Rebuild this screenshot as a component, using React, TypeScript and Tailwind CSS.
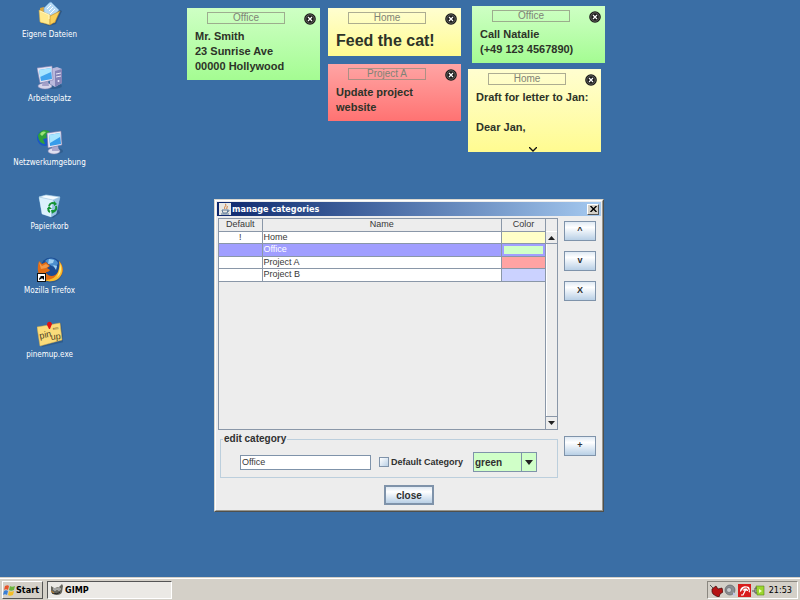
import { useState, type ReactNode } from "react";

const tahoma = "font-['DejaVu_Sans_Condensed','DejaVu_Sans',sans-serif]";

function FolderIcon() {
  return (
    <svg viewBox="0 0 26 26" className="size-[26px]" aria-hidden="true">
      <path d="M4 22l8 3 7-2 6-13-2-1z" fill="#1d3c62" opacity=".45" />
      <path d="M3 7l4-1 2 2 9-1 3 3-3 12H4z" fill="#dda63b" />
      <path d="M7 7l5-5 2-1 8 8-7 9-8-3z" fill="#b6daf5" stroke="#6da5d4" strokeWidth=".7" />
      <path d="M10 8l4-4M12 10l4-4M13 13l5-5" stroke="#fff" strokeWidth="1" />
      <path d="M2 9l11 5v10L3 21z" fill="#ffe98d" stroke="#d7ab3f" strokeWidth=".5" />
      <path d="M13 15l10-5-5 11-5 3z" fill="#f9cf58" stroke="#b98527" strokeWidth=".6" />
      <path d="M3 10l9 4v4" stroke="#fff6c4" strokeWidth="1" fill="none" />
    </svg>
  );
}

function ComputerIcon() {
  return (
    <svg viewBox="0 0 26 26" className="size-[26px]" aria-hidden="true">
      <ellipse cx="16" cy="21" rx="9" ry="3" fill="#23456f" opacity=".4" />
      <path d="M13 4l7-2 5 2v14l-7 4-5-3z" fill="#bab9dc" />
      <path d="M18 6l7-2v14l-7 4z" fill="#8483b6" />
      <path d="M19 9l5-1M19 12l5-1" stroke="#e8e7f8" />
      <circle cx="21.500" cy="16" r="1" fill="#ecebff" />
      <ellipse cx="8" cy="21" rx="7" ry="3" fill="#d7d5ea" stroke="#8c8ab5" strokeWidth=".5" />
      <path d="M6 16h5l1 5H5z" fill="#a3a0c8" />
      <path d="M0 3l15-2 1 14-13 3z" fill="#e4e3f3" stroke="#807eae" strokeWidth=".6" />
      <path d="M2 5l12-2 1 11-11 2z" fill="#42a4ee" />
      <path d="M2 5l12-2v4L3 12z" fill="#a8e5ff" />
    </svg>
  );
}

function NetworkIcon() {
  return (
    <svg viewBox="0 0 26 26" className="size-[26px]" aria-hidden="true">
      <ellipse cx="19" cy="22" rx="7" ry="3" fill="#23456f" opacity=".4" />
      <circle cx="8" cy="9" r="8" fill="#1b58c4" />
      <path d="M1 6c3-6 9-6 12-3L9 6l1 3-4 1 2 5c-4 0-7-4-7-9z" fill="#2fa13a" />
      <path d="M3 5c2-3 4-3 6-2L5 7z" fill="#9be477" />
      <ellipse cx="17" cy="22" rx="6" ry="3" fill="#dfdeef" stroke="#8784ae" strokeWidth=".5" />
      <path d="M15 17h6l1 5h-7z" fill="#aaa8ce" />
      <path d="M10 4l14-2 1 14-14 3z" fill="#e9e8f5" stroke="#706e9d" strokeWidth=".6" />
      <path d="M12 6l11-2 1 11-11 2z" fill="#379ceb" />
      <path d="M12 6l11-2v4l-10 6z" fill="#a7e5ff" />
    </svg>
  );
}

function RecycleBinIcon() {
  return (
    <svg viewBox="0 0 26 26" className="size-[26px]" aria-hidden="true">
      <path d="M5 21l11 4 7-5-1-3z" fill="#23456f" opacity=".45" />
      <path d="M2 4l7-2 14 2-4 17-5 3-9-3z" fill="#b7ddf4" stroke="#76a8cf" strokeWidth=".6" />
      <path d="M2 4l14 3-2 17-9-3z" fill="#dcf1fd" />
      <path d="M16 7l7-3-4 17-5 3z" fill="#98c3e3" />
      <path d="M2 4l7-2 14 2-7 3z" fill="#f3fbff" stroke="#94bcd8" strokeWidth=".5" />
      <g fill="none" stroke="#159335" strokeWidth="2">
        <path d="M12 13c1-3 4-4 6-2M19 13c1 3-1 5-3 6M13 19c-2-1-2-3-1-4" />
      </g>
      <path d="M17 8l3 3-3 2zM18 17l-3 4-1-4zM10 16l2-3 3 3z" fill="#159335" />
    </svg>
  );
}

function FirefoxIcon() {
  return (
    <svg viewBox="0 0 26 26" className="size-[26px]" aria-hidden="true">
      <circle cx="14" cy="14" r="11.500" fill="#1d3c62" opacity=".4" />
      <circle cx="14" cy="11" r="10.500" fill="#1c4c92" />
      <path d="M8 4c4-4 11-3 13 2l-2 5-6-3z" fill="#4c8fce" />
      <path d="M12 2l5 1-1 3-5 1zM16 8l4 1-1 4z" fill="#9fcff0" />
      <path d="M22 4c5 5 5 12 1 16s-12 6-17 2C0 18 0 10 2 4l3 3 4-2 4 4-3 2 3 2c-2 3-4 1-4 3 3 4 9 4 12-1 2-4 3-7 1-11z" fill="#e06c14" />
      <path d="M22 4c5 6 4 13 0 17-4 4-10 4-14 2 7 0 11-3 13-8 1-3 2-7 1-11z" fill="#f7bd2f" />
      <path d="M23 7c2 5 1 10-3 13 2-4 3-8 3-13z" fill="#ffec8a" />
      <path d="M2 5l3 4 4-2 3 2-3 2-5 1z" fill="#f29a4a" />
      <rect x=".5" y="16.500" width="8" height="8" fill="#fff" stroke="#111" />
      <path d="M2 23c0-2 1-3 2-3l-1-1h4v4l-1-1c-1-1-2 0-4 1z" fill="#000" />
    </svg>
  );
}

function PinIcon() {
  return (
    <svg viewBox="0 0 26 26" className="size-[26px]" aria-hidden="true">
      <path d="M2 6l22-4 3 19-22 5z" fill="#1d3c62" opacity=".35" />
      <path d="M0 6l23-4 2 17-22 6z" fill="#fbdc7a" stroke="#d7ae4b" strokeWidth=".5" />
      <g fill="#4a3c20" fontFamily="Liberation Sans, sans-serif">
        <text x="3" y="18" fontSize="9" transform="rotate(-12 3 18)">pin</text>
        <text x="14" y="19" fontSize="9" transform="rotate(-6 14 19)">up</text>
        <text x="16" y="9" fontSize="4" transform="rotate(-9 16 9)">em</text>
      </g>
      <path d="M10 4c0-4 4-4 5-1l-2 5h-1z" fill="#e01212" />
    </svg>
  );
}

const shortcuts = [
  { label: "Eigene Dateien", icon: <FolderIcon /> },
  { label: "Arbeitsplatz", icon: <ComputerIcon /> },
  { label: "Netzwerkumgebung", icon: <NetworkIcon /> },
  { label: "Papierkorb", icon: <RecycleBinIcon /> },
  { label: "Mozilla Firefox", icon: <FirefoxIcon /> },
  { label: "pinemup.exe", icon: <PinIcon /> },
];

function Shortcut({ label, icon }: { label: string; icon: ReactNode }) {
  return (
    <li className="h-16">
      <button className="flex w-full flex-col items-center gap-[2px] pt-px text-[8px] leading-3 whitespace-nowrap text-white">
        {icon}
        {label}
      </button>
    </li>
  );
}

const noteColors = {
  green: "from-[#ceffc4] to-[#a4fc92]",
  yellow: "from-[#fffed0] to-[#fffb90]",
  red: "from-[#ffa4a4] to-[#ff7272]",
};

type NoteProps = {
  category: string;
  text: string;
  color: keyof typeof noteColors;
  place: string;
  large?: boolean;
  more?: boolean;
};

function Note({ category, text, color, place, large, more }: NoteProps) {
  return (
    <article className={`absolute w-[133px] bg-linear-to-b px-2 pt-1 ${noteColors[color]} ${place}`}>
      <header className="mb-[5px] flex h-3 items-start justify-between pl-3">
        <h2 className="h-3 w-[78px] border border-[#8a8a7a]/70 text-center text-[10px] leading-[10px] text-[#7f8376]">
          {category}
        </h2>
        <button aria-label="Close note" className="-mr-1 pt-px">
          <svg viewBox="0 0 12 12" className="size-3" aria-hidden="true">
            <circle cx="6" cy="6" r="5.800" fill="#191919" />
            <circle cx="6" cy="6" r="4.200" fill="none" stroke="#9a9a90" strokeWidth=".6" />
            <path d="M4 4l4 4M8 4L4 8" stroke="#fff" strokeWidth="1.200" />
          </svg>
        </button>
      </header>
      <p className={`font-bold whitespace-pre text-[#2d3328] ${large ? "text-[16px] leading-6" : "text-[11px] leading-[15px]"}`}>
        {text}
      </p>
      {more && (
        <svg viewBox="0 0 8 5" className="absolute bottom-0 left-[61px] h-[5px] w-2" aria-hidden="true">
          <path d="M0 0l4 4 4-4" fill="none" stroke="#111" strokeWidth="1.300" />
        </svg>
      )}
    </article>
  );
}

const rows = [
  { name: "Home", isDefault: true, swatch: "bg-[#ffffc8]" },
  { name: "Office", isDefault: false, swatch: "bg-[#d0ffc8]" },
  { name: "Project A", isDefault: false, swatch: "bg-[#ffa3a3]" },
  { name: "Project B", isDefault: false, swatch: "bg-[#cbd2ff]" },
];

function MetalButton({ children, label, size }: { children: ReactNode; label?: string; size: string }) {
  return (
    <button
      aria-label={label}
      className={`flex items-center justify-center border-[#7f93aa] bg-linear-to-b from-[#dfe9f3] via-white via-30% to-[#b9d0e6] font-bold text-[#303030] ${size}`}
    >
      {children}
    </button>
  );
}

function Arrow({ up }: { up?: boolean }) {
  return (
    <svg viewBox="0 0 7 4" className="h-1 w-[7px]" aria-hidden="true">
      <path d={up ? "M0 4L3.500 0 7 4z" : "M0 0h7L3.500 4z"} fill="#222" />
    </svg>
  );
}

function CategoryTable({ selected, onSelect }: { selected: number; onSelect: (index: number) => void }) {
  return (
    <div className="flex h-[212px] border border-[#8a97a8]">
      <div className="flex-1">
        <table className="w-full table-fixed border-collapse text-[9px] leading-[11px] text-[#383838]">
          <thead>
            <tr className="h-3">
              <th className="w-[43px] border-r border-b border-[#8a97a8] p-0 font-normal">Default</th>
              <th className="border-r border-b border-[#8a97a8] p-0 font-normal">Name</th>
              <th className="w-[44px] border-r border-b border-[#8a97a8] p-0 font-normal">Color</th>
            </tr>
          </thead>
          <tbody>
            {rows.map((row, i) => (
              <tr
                key={row.name}
                onClick={() => onSelect(i)}
                className={`odd:h-3 even:h-[13px] ${i === selected ? "bg-[#a09eff] text-white" : "bg-white"}`}
              >
                <td className="border-r border-b border-[#8a97a8] p-0 text-center">{row.isDefault ? "!" : ""}</td>
                <td className="border-r border-b border-[#8a97a8] p-0 pl-px">{row.name}</td>
                <td className={`border-r border-b border-[#8a97a8] p-0 ${i === selected ? "" : row.swatch}`}>
                  {i === selected && <div className={`mx-[2px] h-2 ${row.swatch}`} />}
                </td>
              </tr>
            ))}
          </tbody>
        </table>
      </div>
      <div className="-ml-px flex w-3 flex-col border-l border-[#8a97a8] pt-3">
        <button aria-label="Scroll up" className="flex h-[13px] items-center justify-center border-t border-b border-t-white border-b-[#8a97a8]">
          <Arrow up />
        </button>
        <div className="flex-1 border-l border-white" />
        <button aria-label="Scroll down" className="flex h-[13px] items-center justify-center border-t border-[#8a97a8]">
          <Arrow />
        </button>
      </div>
    </div>
  );
}

function JavaIcon() {
  return (
    <svg viewBox="0 0 12 12" className="size-3" aria-hidden="true">
      <rect width="12" height="12" fill="#e8e8e4" />
      <path d="M6 1c3 1-2 3 0 5M8 3c1 1-1 2 0 3" fill="none" stroke="#d07028" />
      <path d="M3 7h6l-1 3H4zM9 7c2 0 1 2-1 2M2 11h8" fill="none" stroke="#5c7896" />
    </svg>
  );
}

function CategoryDialog() {
  const [selected, setSelected] = useState(1);
  return (
    <section
      aria-label="manage categories"
      className="absolute top-[199px] left-[214px] w-[390px] border border-t-[#d8d6ce] border-r-[#50504c] border-b-[#50504c] border-l-[#d8d6ce] bg-[#ededed]"
    >
      <div className="border border-t-white border-r-[#98968e] border-b-[#98968e] border-l-white p-px">
        <header className="flex h-[14px] items-center gap-px bg-linear-to-r from-[#0e276d] to-[#a6caf0] px-[2px]">
          <JavaIcon />
          <h1 className={`flex-1 text-[9px] leading-3 font-bold text-white ${tahoma}`}>manage categories</h1>
          <button
            aria-label="Close"
            className="flex h-[11px] w-3 items-center justify-center border border-t-white border-r-[#555] border-b-[#555] border-l-white bg-[#d4d0c8]"
          >
            <svg viewBox="0 0 7 6" className="h-[6px] w-[7px]" aria-hidden="true">
              <path d="M.5 0l6 6M6.500 0l-6 6" stroke="#000" strokeWidth="1.400" />
            </svg>
          </button>
        </header>
        <div className="flex gap-[6px] pt-[2px] pr-[5px] pl-px">
          <div className="flex-1">
            <CategoryTable selected={selected} onSelect={setSelected} />
            <fieldset className="mt-[3px] ml-[2px] h-[45px] border border-[#bccfdd] pl-[19px]">
              <legend className="-ml-[17px] px-px text-[10px] leading-3 font-bold text-[#303030]">edit category</legend>
              <div className="flex items-center pt-[7px]">
                <input
                  aria-label="Category name"
                  defaultValue="Office"
                  className="h-[15px] w-[131px] border border-[#7f93aa] bg-white pl-px text-[9px] text-[#383838] outline-none"
                />
                <label className="ml-2 flex items-center gap-[2px] text-[9px] leading-3 font-bold whitespace-nowrap text-[#303030]">
                  <input
                    type="checkbox"
                    className="size-[10px] appearance-none border border-[#7f93aa] bg-linear-to-br from-white to-[#b9d0e6] checked:bg-[#6382bf]"
                  />
                  Default Category
                </label>
                <div className="relative mr-5 ml-auto">
                  <select
                    aria-label="Category color"
                    defaultValue="green"
                    className="block h-5 w-16 appearance-none border border-[#7f93aa] bg-[#d0ffc8] pl-px text-[10px] font-bold text-[#303030] outline-none"
                  >
                    <option>yellow</option>
                    <option>green</option>
                    <option>red</option>
                    <option>blue</option>
                  </select>
                  <span className="pointer-events-none absolute inset-y-0 right-0 flex w-4 items-center justify-center border border-[#7f93aa]">
                    <svg viewBox="0 0 8 5" className="h-[5px] w-2" aria-hidden="true">
                      <path d="M0 0h8L4 5z" fill="#222" />
                    </svg>
                  </span>
                </div>
              </div>
            </fieldset>
          </div>
          <div className="flex w-8 flex-col gap-[10px] pt-[3px] text-[9px]">
            <MetalButton label="Move up" size="h-5 w-8 border">^</MetalButton>
            <MetalButton label="Move down" size="h-5 w-8 border">v</MetalButton>
            <MetalButton label="Delete category" size="h-5 w-8 border">X</MetalButton>
            <div className="mt-auto pb-[22px]">
              <MetalButton label="Add category" size="h-5 w-8 border">+</MetalButton>
            </div>
          </div>
        </div>
        <footer className="flex justify-center pt-[7px] pb-1 text-[10px]">
          <MetalButton size="h-5 w-[50px] border-2">close</MetalButton>
        </footer>
      </div>
    </section>
  );
}

function WindowsFlag() {
  return (
    <svg viewBox="0 0 12 12" className="size-3" aria-hidden="true">
      <path d="M2 2c2-1 3-1 4 0L5 6c-1-1-3-1-4 0z" fill="#e8542a" />
      <path d="M7 2c1 1 3 1 5 0l-1 4c-2 1-4 1-5 0z" fill="#6bb43c" />
      <path d="M1 7c1-1 3-1 4 0l-1 4c-1-1-3-1-4 0z" fill="#397fd6" />
      <path d="M6 7c1 1 3 1 5 0l-1 4c-2 1-4 1-5 0z" fill="#f5bf26" />
    </svg>
  );
}

function GimpIcon() {
  return (
    <svg viewBox="0 0 13 12" className="h-3 w-[13px]" aria-hidden="true">
      <path d="M1 2l3 2 5-1 3-3 1 2-1 6c-1 4-9 4-11 0z" fill="#65645c" />
      <circle cx="5" cy="5" r="1.600" fill="#fff" />
      <circle cx="9" cy="5" r="1.600" fill="#fff" />
      <circle cx="5" cy="5" r=".7" />
      <circle cx="9" cy="5" r=".7" />
      <path d="M2 9c3 1 6 1 8-1" fill="none" stroke="#222" />
      <path d="M1 7l3 2" stroke="#c9872d" />
    </svg>
  );
}

function TrayIcons() {
  return (
    <div className="flex items-center gap-px">
      <svg viewBox="0 0 13 13" className="size-[13px]" aria-hidden="true">
        <path d="M0 1l5 5" stroke="#555" />
        <path d="M2 5l4-3 2 3 4-1 1 4-3 2-1 3-3-1-3-2-1-2z" fill="#b51414" stroke="#3c0808" strokeWidth=".7" />
      </svg>
      <svg viewBox="0 0 13 13" className="size-[13px]" aria-hidden="true">
        <circle cx="6" cy="6" r="5" fill="#8b8e92" stroke="#54585c" strokeWidth=".6" />
        <circle cx="5" cy="6" r="2.500" fill="#c6c9cc" stroke="#5d6165" strokeWidth=".6" />
        <path d="M9 8l3 3-3 1z" fill="#bfc4e8" />
      </svg>
      <svg viewBox="0 0 13 13" className="size-[13px]" aria-hidden="true">
        <rect width="13" height="13" fill="#d81c1c" />
        <path d="M2 8C2 3 6 1 11 3c1 2 1 4 1 6-1-2-2-2-3-2-1-1-2-1-3 0-1-1-3 0-4 1z" fill="#fff" />
        <path d="M4 7c1-3 3-3 5-3 1 1 1 2 2 3" fill="none" stroke="#d81c1c" />
        <path d="M8 5l-3 6H3" fill="none" stroke="#fff" strokeWidth="1.200" />
      </svg>
      <svg viewBox="0 0 13 13" className="size-[13px]" aria-hidden="true">
        <path d="M4 2h8v9H5z" fill="#9bd62f" stroke="#598318" strokeWidth=".6" />
        <path d="M0 7h3M5 4H3v5h2" fill="none" stroke="#555" />
        <path d="M7 5l3 2-3 2z" fill="#efffc2" />
      </svg>
    </div>
  );
}

function Taskbar() {
  return (
    <footer className={`flex h-[23px] items-center gap-1 border-t border-[#d4d0c8] bg-[#d4d0c8] px-[2px] text-[9px] leading-3 shadow-[inset_0_1px_0_white] ${tahoma}`}>
      <button className="mt-[2px] flex h-[18px] w-[41px] items-center gap-px border border-t-white border-r-[#555] border-b-[#555] border-l-white font-bold">
        <WindowsFlag />
        Start
      </button>
      <button className="mt-[2px] flex h-[18px] w-[125px] items-center gap-[2px] border border-t-[#555] border-r-white border-b-white border-l-[#555] bg-[#ebe9e5] pl-[2px] font-bold">
        <GimpIcon />
        GIMP
      </button>
      <div className="mt-[2px] ml-auto flex h-[18px] w-[91px] items-center justify-between border border-t-[#8a8780] border-r-white border-b-white border-l-[#8a8780] pr-[5px] pl-[2px]">
        <TrayIcons />
        <time>21:53</time>
      </div>
    </footer>
  );
}

export default function App() {
  return (
    <div className="flex min-h-screen flex-col font-['Liberation_Sans',Arial,sans-serif]">
      <main className="relative flex-1 bg-[#3a6ea5]">
        <ul className={`w-[99px] ${tahoma}`}>
          {shortcuts.map((s) => (
            <Shortcut key={s.label} {...s} />
          ))}
        </ul>
        <Note category="Office" color="green" place="left-[187px] top-2 h-[72px]" text={"Mr. Smith\n23 Sunrise Ave\n00000 Hollywood"} />
        <Note category="Home" color="yellow" place="left-[328px] top-2 h-12" text="Feed the cat!" large />
        <Note category="Project A" color="red" place="left-[328px] top-16 h-[57px]" text={"Update project\nwebsite"} />
        <Note category="Office" color="green" place="left-[472px] top-[6px] h-[57px]" text={"Call Natalie\n(+49 123 4567890)"} />
        <Note category="Home" color="yellow" place="left-[468px] top-[69px] h-[83px]" text={"Draft for letter to Jan:\n\nDear Jan,"} more />
        <CategoryDialog />
      </main>
      <Taskbar />
    </div>
  );
}
